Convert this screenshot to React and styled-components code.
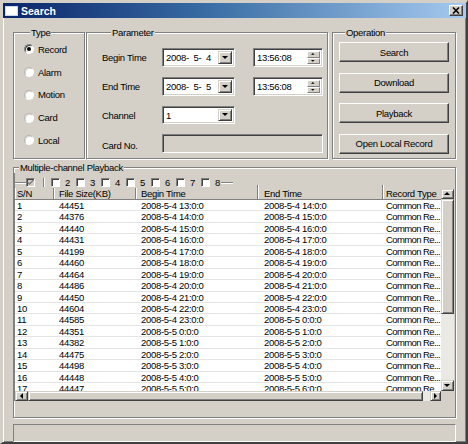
import React from 'react'
import styled, { createGlobalStyle } from 'styled-components'

const FONT = '"Liberation Sans", Arial, sans-serif'
const FACE = '#d4d0c8'

const GlobalStyle = createGlobalStyle`
  html, body { margin: 0; padding: 0; background: #fff; }
  body { font-family: ${FONT}; font-size: 9.5px; letter-spacing: -0.3px; color: #000; }
  * { box-sizing: border-box; }
`

const Window = styled.div`
  width: 468px;
  height: 444px;
  background: ${FACE};
  border-style: solid;
  border-width: 3px 2px 2px 3px;
  border-color: ${FACE} #404040 #404040 ${FACE};
  box-shadow: inset 1px 1px #fff, inset -1px -1px #808080;
  display: flex;
  flex-direction: column;
  overflow: hidden;
`

const TitleBar = styled.div`
  height: 15px;
  flex: none;
  display: flex;
  align-items: center;
  padding: 0 3px 0 2px;
  background: linear-gradient(90deg, #0a246a 0%, #3a6ea5 45%, #a6caf0 100%);
  color: #fff;
  letter-spacing: 0;
  font: bold 10.5px "Liberation Sans", Arial, sans-serif;
`

const TitleIcon = styled.span`
  width: 13px;
  height: 10px;
  background: #fff;
  border: 1px solid #c8d8f0;
`

const TitleText = styled.span`
  margin-left: 3px;
`

const CloseBtn = styled.span`
  margin-left: auto;
  width: 14px;
  height: 11px;
  display: flex;
  align-items: center;
  justify-content: center;
  background: ${FACE};
  border: 1px solid;
  border-color: #fff #404040 #404040 #fff;
  box-shadow: inset -1px -1px #808080;
`

const Body = styled.div`
  flex: 1;
  display: flex;
  flex-direction: column;
  padding: 9px 10px 0 10px;
`

const TopRow = styled.div`
  display: flex;
  align-items: flex-start;
`

const Group = styled.fieldset`
  margin: ${p => p.$top || 0}px 0 0 ${p => p.$gap || 0}px;
  width: ${p => (p.$w ? `${p.$w}px` : 'auto')};
  flex: ${p => (p.$w ? 'none' : '1')};
  height: ${p => (p.$h ? `${p.$h}px` : 'auto')};
  padding: ${p => p.$pad || '0'};
  border: 1px solid #808080;
  box-shadow: inset 1px 1px #fff, 1px 1px #fff;
  min-width: 0;
`

const Legend = styled.legend`
  margin-left: ${p => p.$x}px;
  padding: 0 1px;
  font-size: 9.5px;
  line-height: 11px;
  background: ${FACE};
`

const RadioList = styled.div`
  display: flex;
  flex-direction: column;
`

const RadioRow = styled.label`
  height: 22.75px;
  display: flex;
  align-items: center;
  gap: 4px;
`

const RadioCircle = styled.span`
  width: 10px;
  height: 10px;
  border-radius: 50%;
  background: #fff;
  border: 1px solid;
  border-color: ${p => (p.$on ? '#808080 #fff #fff #808080' : '#b8b6b0 #fff #fff #b8b6b0')};
  box-shadow: inset 1px 1px ${p => (p.$on ? '#404040' : '#dcdad4')};
  display: flex;
  align-items: center;
  justify-content: center;
  &::after {
    content: '';
    width: 4px;
    height: 4px;
    border-radius: 50%;
    background: ${p => (p.$on ? '#000' : 'transparent')};
  }
`

const ParamGrid = styled.div`
  display: grid;
  grid-template-columns: 60px 73px 18px 70px;
  grid-template-rows: 19px 19px 18px 19px;
  row-gap: 10px;
`

const FieldLabel = styled.span`
  grid-column: 1;
  align-self: center;
  margin-top: ${p => p.$dy || 0}px;
  white-space: nowrap;
`

const Sunken = styled.div`
  grid-column: ${p => p.$col || 'auto'};
  display: flex;
  height: 100%;
  background: ${p => (p.$disabled ? FACE : '#fff')};
  border: 1px solid;
  border-color: #808080 #fff #fff #808080;
  box-shadow: inset 1px 1px #404040, inset -1px -1px ${FACE};
  padding: 2px;
`

const FieldText = styled.span`
  flex: 1;
  padding-left: 1px;
  line-height: 13px;
  white-space: pre;
  overflow: hidden;
`

const DropBtn = styled.span`
  width: 14px;
  flex: none;
  display: flex;
  align-items: center;
  justify-content: center;
  background: ${FACE};
  border: 1px solid;
  border-color: ${FACE} #404040 #404040 ${FACE};
  box-shadow: inset 1px 1px #fff, inset -1px -1px #808080;
`

const Spinner = styled.span`
  width: 13px;
  flex: none;
  display: flex;
  flex-direction: column;
`

const SpinBtn = styled.span`
  flex: 1;
  display: flex;
  align-items: center;
  justify-content: center;
  background: ${FACE};
  border: 1px solid;
  border-color: #fff #808080 #808080 #fff;
`

const OpList = styled.div`
  display: flex;
  flex-direction: column;
  gap: 10.5px;
`

const Button = styled.button`
  height: 20px;
  width: 100%;
  padding: 0;
  font: 9.5px ${FONT};
  letter-spacing: -0.3px;
  color: #000;
  background: ${FACE};
  border: 1px solid;
  border-color: #fff #404040 #404040 #fff;
  box-shadow: inset -1px -1px #808080;
`

const ChannelRow = styled.div`
  position: relative;
  z-index: 1;
  align-self: flex-start;
  display: flex;
  align-items: center;
  height: 11px;
  margin: 4px 0 -3px 0;
  padding-right: 2px;
  background: ${FACE};
`

const Dash = styled.span`
  width: ${p => p.$w}px;
  height: 1px;
  margin-left: ${p => p.$ml || 0}px;
  background: #808080;
  box-shadow: 0 1px #fff;
`

const Check = styled.span`
  width: 9px;
  height: 9px;
  flex: none;
  display: flex;
  align-items: center;
  justify-content: center;
  background: ${p => (p.$disabled ? FACE : '#fff')};
  border: 1px solid;
  border-color: #808080 #fff #fff #808080;
  box-shadow: inset 1px 1px #404040;
`

const Bar = styled.span`
  width: 1px;
  height: 9px;
  margin: 0 7px 0 8px;
  background: #808080;
  box-shadow: 1px 0 #fff;
`

const ChannelItem = styled.span`
  width: 25px;
  display: flex;
  align-items: center;
  gap: 5px;
  line-height: 11px;
`

const ListBox = styled.div`
  display: flex;
  flex-direction: column;
  border-left: 1px solid #808080;
`

const ListMain = styled.div`
  display: flex;
`

const Table = styled.div`
  flex: 1;
  display: flex;
  flex-direction: column;
  min-width: 0;
`

const Header = styled.div`
  height: 15px;
  display: flex;
  background: ${FACE};
  border-bottom: 1px solid #808080;
`

const HeadCell = styled.div`
  width: ${p => p.$w}px;
  flex: ${p => (p.$last ? '1' : 'none')};
  padding: 4px 0 0 ${p => p.$pl}px;
  line-height: 10px;
  white-space: nowrap;
  overflow: hidden;
  border-right: ${p => (p.$last ? 'none' : '1px solid #808080')};
  box-shadow: inset 1px 0 #fff;
`

const Rows = styled.div`
  height: 191px;
  overflow: hidden;
  background: #fff;
`

const Row = styled.div`
  height: 11.44px;
  display: flex;
  border-bottom: 1px solid #e4e4e4;
`

const Cell = styled.div`
  width: ${p => p.$w}px;
  flex: ${p => (p.$last ? '1' : 'none')};
  padding-left: ${p => p.$pl}px;
  line-height: 11px;
  letter-spacing: ${p => (p.$last ? '-0.6px' : 'inherit')};
  white-space: nowrap;
  overflow: hidden;
`

const VScroll = styled.div`
  width: 13px;
  flex: none;
  display: flex;
  flex-direction: column;
  padding-top: 4px;
`

const ScrollBtn = styled.span`
  width: ${p => (p.$w ? `${p.$w}px` : '100%')};
  height: ${p => (p.$h ? `${p.$h}px` : '100%')};
  flex: none;
  display: flex;
  align-items: center;
  justify-content: center;
  background: ${FACE};
  border: 1px solid;
  border-color: ${FACE} #404040 #404040 ${FACE};
  box-shadow: inset 1px 1px #fff, inset -1px -1px #808080;
`

const Track = styled.span`
  flex: 1;
  background: #ebe9e4;
`

const HScroll = styled.div`
  height: 10px;
  display: flex;
`

const Corner = styled.span`
  width: 13px;
  flex: none;
  background: ${FACE};
`

const StatusBox = styled.div`
  margin-top: 6px;
  height: 18px;
  flex: none;
  border: 1px solid;
  border-color: #808080 #fff #fff #808080;
`

const Tri = ({ dir = 'down', s = 1 }) => {
  const v = dir === 'down' || dir === 'up'
  const pts = {
    down: '0,0 6,0 3,3',
    up: '0,3 6,3 3,0',
    left: '3,0 3,6 0,3',
    right: '0,0 0,6 3,3',
  }[dir]
  const w = v ? 7 : 4
  const h = v ? 4 : 7
  return (
    <svg width={w * s} height={h * s} viewBox={`0 0 ${w} ${h}`}>
      <polygon points={pts} fill="#000" />
    </svg>
  )
}

const CheckMark = ({ color }) => (
  <svg width="7" height="7" viewBox="0 0 7 7">
    <polyline points="0.5,3 2.5,5 6.5,1" fill="none" stroke={color} strokeWidth="1.5" />
  </svg>
)

const CloseIcon = () => (
  <svg width="8" height="7" viewBox="0 0 8 7">
    <path d="M1 0.5 L7 6.5 M7 0.5 L1 6.5" stroke="#000" strokeWidth="1.6" />
  </svg>
)

const COLS = [
  { title: 'S/N', w: 39, pl: 2 },
  { title: 'File Size(KB)', w: 82, pl: 5 },
  { title: 'Begin Time', w: 122, pl: 5 },
  { title: 'End Time', w: 125, pl: 6 },
  { title: 'Record Type', w: 58, pl: 3 },
]

const SIZES = [44451, 44376, 44440, 44431, 44199, 44460, 44464, 44486, 44450, 44604, 44585, 44351, 44382, 44475, 44498, 44448, 44447]

const stamp = h => (h < 24 ? `2008-5-4 ${h}:0:0` : `2008-5-5 ${h - 24}:0:0`)

const ROWS = SIZES.map((size, i) => [String(i + 1), String(size), stamp(13 + i), stamp(14 + i), 'Common Re...'])

const TYPES = ['Record', 'Alarm', 'Motion', 'Card', 'Local']

export default function App() {
  return (
    <>
      <GlobalStyle />
      <Window>
        <TitleBar>
          <TitleIcon />
          <TitleText>Search</TitleText>
          <CloseBtn><CloseIcon /></CloseBtn>
        </TitleBar>
        <Body>
          <TopRow>
            <Group $w={72} $h={132} $pad="0 0 0 10px">
              <Legend $x={6}>Type</Legend>
              <RadioList>
                {TYPES.map((t, i) => (
                  <RadioRow key={t}>
                    <RadioCircle $on={i === 0} />
                    {t}
                  </RadioRow>
                ))}
              </RadioList>
            </Group>
            <Group $w={242} $h={132} $gap={1} $pad="10px 0 0 15px">
              <Legend $x={9}>Parameter</Legend>
              <ParamGrid>
                <FieldLabel>Begin Time</FieldLabel>
                <Sunken $col={2}>
                  <FieldText>{'2008-  5-  4'}</FieldText>
                  <DropBtn><Tri dir="down" /></DropBtn>
                </Sunken>
                <Sunken $col={4}>
                  <FieldText>13:56:08</FieldText>
                  <Spinner>
                    <SpinBtn><Tri dir="up" s={0.6} /></SpinBtn>
                    <SpinBtn><Tri dir="down" s={0.6} /></SpinBtn>
                  </Spinner>
                </Sunken>
                <FieldLabel>End Time</FieldLabel>
                <Sunken $col={2}>
                  <FieldText>{'2008-  5-  5'}</FieldText>
                  <DropBtn><Tri dir="down" /></DropBtn>
                </Sunken>
                <Sunken $col={4}>
                  <FieldText>13:56:08</FieldText>
                  <Spinner>
                    <SpinBtn><Tri dir="up" s={0.6} /></SpinBtn>
                    <SpinBtn><Tri dir="down" s={0.6} /></SpinBtn>
                  </Spinner>
                </Sunken>
                <FieldLabel>Channel</FieldLabel>
                <Sunken $col={2}>
                  <FieldText>1</FieldText>
                  <DropBtn><Tri dir="down" /></DropBtn>
                </Sunken>
                <FieldLabel $dy={4}>Card No.</FieldLabel>
                <Sunken $col="2 / 5" $disabled />
              </ParamGrid>
            </Group>
            <Group $h={132} $gap={4} $pad="4px 6px 0 6px">
              <Legend $x={6}>Operation</Legend>
              <OpList>
                <Button>Search</Button>
                <Button>Download</Button>
                <Button>Playback</Button>
                <Button>Open Local Record</Button>
              </OpList>
            </Group>
          </TopRow>

          <Group $h={244} $pad="0 1px 2px 0" $top={3}>
            <Legend $x={5}>Multiple-channel Playback</Legend>
            <ListBox>
              <ChannelRow>
                <Dash $w={11} />
                <Check $disabled><CheckMark color="#808080" /></Check>
                <Bar />
                {[2, 3, 4, 5, 6, 7, 8].map(n => (
                  <ChannelItem key={n}>
                    <Check />
                    {n}
                  </ChannelItem>
                ))}
                <Dash $w={12} $ml={-5} />
              </ChannelRow>
              <ListMain>
                <Table>
                  <Header>
                    {COLS.map((c, i) => (
                      <HeadCell key={c.title} $w={c.w} $pl={c.pl} $last={i === COLS.length - 1}>
                        {c.title}
                      </HeadCell>
                    ))}
                  </Header>
                  <Rows>
                    {ROWS.map(r => (
                      <Row key={r[0]}>
                        {r.map((v, i) => (
                          <Cell key={i} $w={COLS[i].w} $pl={COLS[i].pl} $last={i === COLS.length - 1}>
                            {v}
                          </Cell>
                        ))}
                      </Row>
                    ))}
                  </Rows>
                </Table>
                <VScroll>
                  <ScrollBtn $h={10}><Tri dir="up" /></ScrollBtn>
                  <ScrollBtn $h={115} />
                  <Track />
                  <ScrollBtn $h={11}><Tri dir="down" /></ScrollBtn>
                </VScroll>
              </ListMain>
              <HScroll>
                <ScrollBtn $w={13}><Tri dir="left" /></ScrollBtn>
                <ScrollBtn $w={395} />
                <Track />
                <ScrollBtn $w={11}><Tri dir="right" /></ScrollBtn>
                <Corner />
              </HScroll>
            </ListBox>
          </Group>

          <StatusBox />
        </Body>
      </Window>
    </>
  )
}
